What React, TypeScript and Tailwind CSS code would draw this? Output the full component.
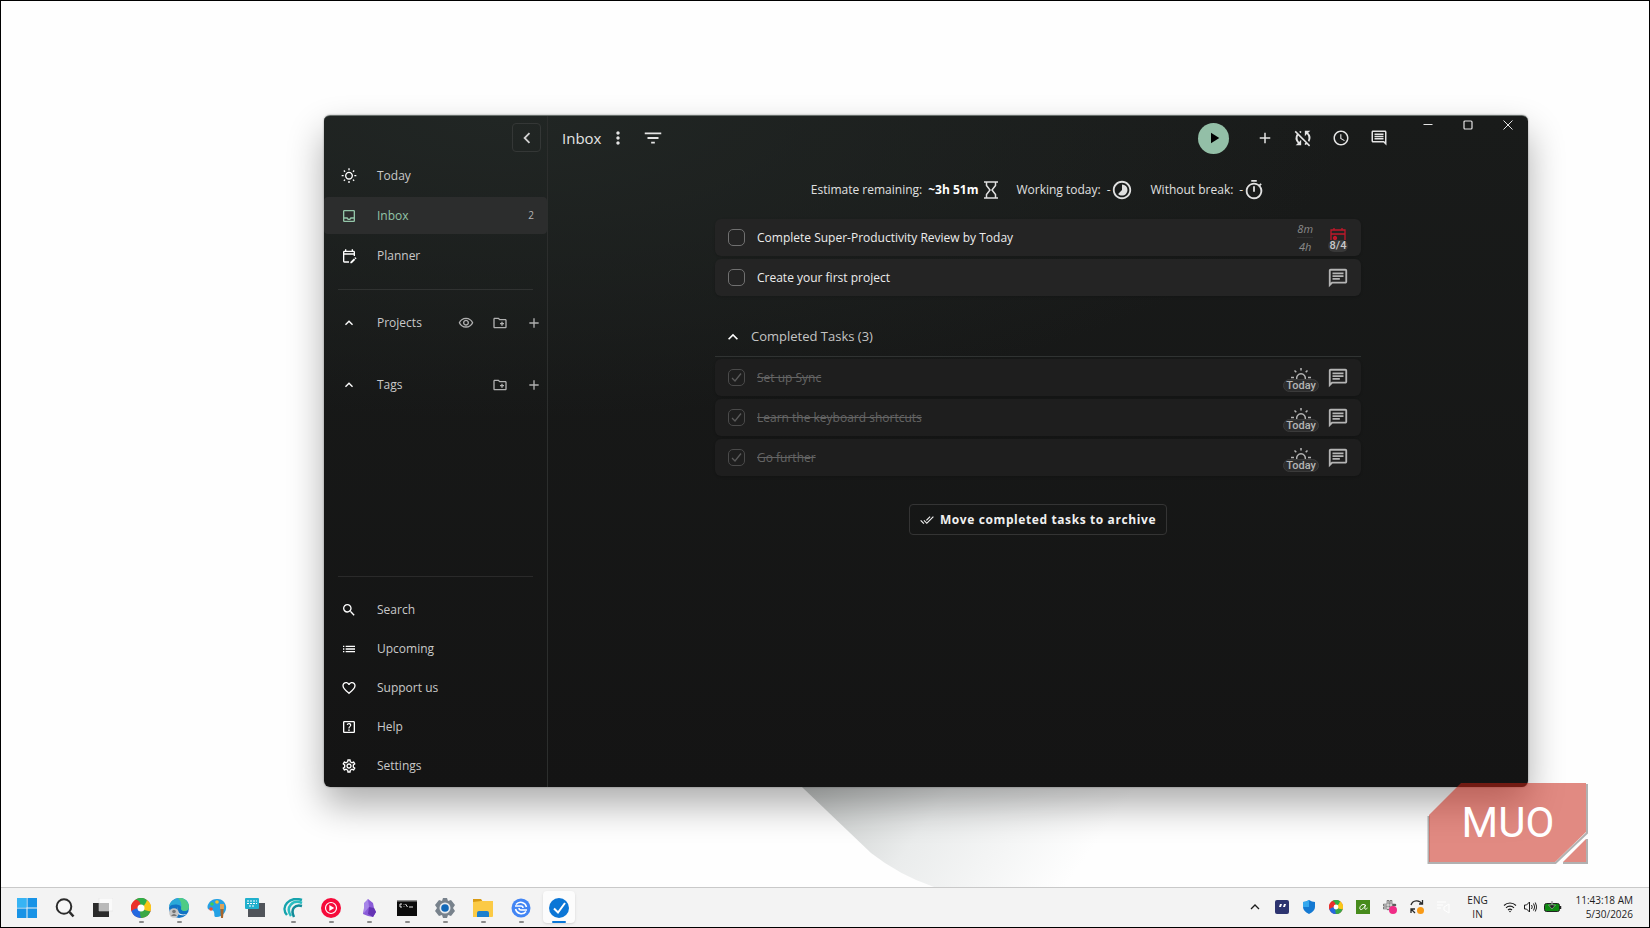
import React, { type ReactNode } from "react";
import {
  MdOutlineWbSunny, MdOutlineInbox, MdOutlineEditCalendar, MdExpandLess, MdOutlineVisibility,
  MdOutlineCreateNewFolder, MdAdd, MdSearch, MdList, MdFavoriteBorder, MdOutlineHelpCenter,
  MdOutlineSettings, MdMoreVert, MdFilterList, MdPlayArrow, MdSyncDisabled, MdSchedule,
  MdOutlineComment, MdOutlineTimer, MdOutlineTimelapse, MdOutlineChat, MdDoneAll, MdChevronLeft,
} from "react-icons/md";

type NavItemProps = { icon: ReactNode; label: string; active?: boolean; count?: number };

function NavItem({ icon, label, active, count }: NavItemProps) {
  return (
    <a
      href="#"
      className={
        active
          ? "flex h-[37px] items-center rounded bg-[#2c2d2d] pl-[17px] pr-[13px] text-[#93c5a8]"
          : "flex h-[37px] items-center rounded pl-[17px] pr-[13px] text-[#c9c9c9]"
      }
    >
      <span className={active ? "w-9 text-base" : "w-9 text-base text-white"}>{icon}</span>
      <span className="grow text-xs">{label}</span>
      {count !== undefined && <span className="text-[10px] text-[#b5b5b5]">{count}</span>}
    </a>
  );
}

function TreeHeader({ label, visibility }: { label: string; visibility?: boolean }) {
  return (
    <div className="flex h-[37px] items-center pl-[17px] pr-[5px] text-[#c9c9c9]">
      <button aria-label={"Collapse " + label} className="w-9 text-base text-white"><MdExpandLess /></button>
      <span className="grow text-xs">{label}</span>
      <span className="flex gap-[18px] text-base text-[#b0b0b0]">
        {visibility && <button aria-label="Show or hide projects"><MdOutlineVisibility /></button>}
        <button aria-label={"New folder in " + label}><MdOutlineCreateNewFolder /></button>
        <button aria-label={"Add to " + label}><MdAdd /></button>
      </span>
    </div>
  );
}

function Sidebar() {
  return (
    <nav className="flex w-56 shrink-0 flex-col border-r border-[#2c2e2d]">
      <div className="flex justify-end pr-[6px] pt-[7px]">
        <button aria-label="Collapse sidebar" className="flex size-[29px] items-center justify-center rounded border border-[#343736] text-[22px] text-[#d0d0d0]">
          <MdChevronLeft />
        </button>
      </div>
      <div className="mt-[5px] flex flex-col gap-[3px]">
        <NavItem icon={<MdOutlineWbSunny />} label="Today" />
        <NavItem icon={<MdOutlineInbox />} label="Inbox" active count={2} />
        <NavItem icon={<MdOutlineEditCalendar />} label="Planner" />
      </div>
      <hr className="mx-[14px] mt-[15px] border-[#303231]" />
      <div className="mt-[14px] flex flex-col gap-[25px]">
        <TreeHeader label="Projects" visibility />
        <TreeHeader label="Tags" />
      </div>
      <hr className="mx-[14px] mt-auto border-[#2a2a2a]" />
      <div className="mb-[3px] mt-[14px] flex flex-col gap-[2px]">
        <NavItem icon={<MdSearch />} label="Search" />
        <NavItem icon={<MdList />} label="Upcoming" />
        <NavItem icon={<MdFavoriteBorder />} label="Support us" />
        <NavItem icon={<MdOutlineHelpCenter />} label="Help" />
        <NavItem icon={<MdOutlineSettings />} label="Settings" />
      </div>
    </nav>
  );
}

function Header() {
  return (
    <header className="flex h-11 items-center pl-[14px] text-[#e4e4e4]">
      <h1 className="text-[15px]">Inbox</h1>
      <button aria-label="More" className="ml-[7px] text-xl"><MdMoreVert /></button>
      <button aria-label="Filter" className="ml-[14px] text-[22px]"><MdFilterList /></button>
      <div className="ml-auto flex items-center gap-4 text-lg">
        <button aria-label="Start tracking" className="mr-[9px] flex size-[31px] items-center justify-center rounded-full bg-[#93bfa7] text-black">
          <MdPlayArrow />
        </button>
        <button aria-label="Add task" className="flex w-[22px] justify-center"><MdAdd /></button>
        <button aria-label="Sync disabled" className="flex w-[22px] justify-center text-[22px]"><MdSyncDisabled /></button>
        <button aria-label="Focus mode" className="flex w-[22px] justify-center"><MdSchedule /></button>
        <button aria-label="Notes" className="flex w-[22px] justify-center"><MdOutlineComment /></button>
      </div>
      <div className="ml-[18px] flex self-start">
        <button aria-label="Minimize" className="flex h-[18px] w-10 items-center justify-center">
          <svg width="10" height="10" viewBox="0 0 10 10" stroke="currentColor"><path d="M0.500 4.500h9" /></svg>
        </button>
        <button aria-label="Maximize" className="flex h-[18px] w-10 items-center justify-center">
          <svg width="10" height="10" viewBox="0 0 10 10" fill="none" stroke="currentColor" strokeWidth="1.200"><rect x="1" y="1" width="8" height="8" rx="1" /></svg>
        </button>
        <button aria-label="Close" className="flex h-[18px] w-10 items-center justify-center">
          <svg width="10" height="10" viewBox="0 0 10 10" stroke="currentColor"><path d="M0.500 0.500l9 9M9.500 0.500l-9 9" /></svg>
        </button>
      </div>
    </header>
  );
}

function Stats() {
  return (
    <div className="mt-[19px] flex items-center justify-center gap-[18px] text-xs text-[#e0e0e0]">
      <span className="flex items-center gap-[6px]">
        Estimate remaining: <b className="text-white">~3h 51m</b>
        <svg width="14" height="18" viewBox="0 0 14 18" fill="none" stroke="currentColor" strokeWidth="1.500">
          <path d="M0 1h14M0 17h14M2.500 1v3.500L6 9l-3.500 4.500V17M11.500 1v3.500L8 9l3.500 4.500V17" />
        </svg>
      </span>
      <span className="flex items-center">
        Working today: <span className="ml-[6px]">-</span>
        <MdOutlineTimelapse className="text-[22px]" />
      </span>
      <span className="flex items-center">
        Without break: <span className="ml-[6px]">-</span>
        <MdOutlineTimer className="text-[22px]" />
      </span>
    </div>
  );
}

function TaskRow({ title, done, children }: { title: string; done?: boolean; children?: ReactNode }) {
  return (
    <li
      className={
        done
          ? "flex h-[37px] items-center rounded-md bg-[#1e1e1e] pl-[13px] pr-3 shadow-sm"
          : "flex h-[37px] items-center rounded-md bg-[#242424] pl-[13px] pr-3 shadow-sm"
      }
    >
      <label className="flex grow items-center gap-3">
        <span className="grid size-[17px] place-items-center">
          <input
            type="checkbox"
            defaultChecked={done}
            className={
              done
                ? "col-start-1 row-start-1 size-[17px] appearance-none rounded-[5px] border border-[#4a4a4a]"
                : "col-start-1 row-start-1 size-[17px] appearance-none rounded-[5px] border border-[#707070]"
            }
          />
          {done && (
            <svg className="col-start-1 row-start-1" width="11" height="11" viewBox="0 0 11 11" fill="none" stroke="#5a5a5a" strokeWidth="1.300">
              <path d="M1 6l3 3 6-7.500" />
            </svg>
          )}
        </span>
        <span className={done ? "text-xs text-[#646464] line-through" : "text-xs text-[#ececec]"}>{title}</span>
      </label>
      <div className="flex items-center gap-2 text-[#b4b4b4]">{children}</div>
    </li>
  );
}

function NotesButton() {
  return <button aria-label="Notes" className="text-[22px]"><MdOutlineChat /></button>;
}

function TodayBadge() {
  return (
    <button className="flex flex-col items-center pt-1">
      <svg width="20" height="11" viewBox="0 0 20 11" fill="none" stroke="currentColor" strokeWidth="1.500">
        <path d="M10 0v2.500M3.500 2.500l1.800 1.800M16.500 2.500l-1.800 1.800M0 9.500h3M17 9.500h3M5.800 11a4.300 4.300 0 1 1 8.400 0" />
      </svg>
      <span className="rounded-full border border-[#3a3a3a] bg-[#2c2c2c] px-[2px] font-['Roboto',sans-serif] text-[11px] font-medium leading-[11px]">Today</span>
    </button>
  );
}

function Main() {
  return (
    <main className="flex min-w-0 grow flex-col">
      <Header />
      <Stats />
      <div className="mx-auto mt-[18px] w-full max-w-[646px]">
        <ul className="flex flex-col gap-[3px]">
          <TaskRow title="Complete Super-Productivity Review by Today">
            <span className="flex flex-col items-center pr-[6px] text-[11px] italic leading-[17px] text-[#8a8a8a]">
              <span className="border-b border-[#303030]">8m</span>
              <span>4h</span>
            </span>
            <button className="flex w-[22px] flex-col items-center pt-[5px] text-[#c0182a]">
              <svg width="16" height="12" viewBox="0 0 16 12" fill="none" stroke="currentColor" strokeWidth="1.300">
                <path d="M1 12V2h14v10M1 6h14M4 0v2M12 0v2" /><circle cx="5" cy="10" r="1.500" fill="currentColor" />
              </svg>
              <span className="rounded-full bg-[#383838] px-[2px] font-['Roboto',sans-serif] text-[11px] font-medium leading-3 text-[#c8c8c8]">8/4</span>
            </button>
          </TaskRow>
          <TaskRow title="Create your first project"><NotesButton /></TaskRow>
        </ul>
        <button className="mt-[26px] flex h-[30px] items-center gap-2 pl-2 text-[13px] text-[#c4c4c4]">
          <MdExpandLess className="text-xl text-white" />
          Completed Tasks (3)
        </button>
        <hr className="mt-1 border-[#303332]" />
        <ul className="mt-[2px] flex flex-col gap-[3px]">
          <TaskRow title="Set up Sync" done><TodayBadge /><NotesButton /></TaskRow>
          <TaskRow title="Learn the keyboard shortcuts" done><TodayBadge /><NotesButton /></TaskRow>
          <TaskRow title="Go further" done><TodayBadge /><NotesButton /></TaskRow>
        </ul>
      </div>
      <button className="mx-auto mt-7 flex h-[31px] items-center gap-[6px] rounded border border-[#343434] px-[10px] text-xs font-bold tracking-wider text-[#f0f0f0]">
        <MdDoneAll className="text-sm" />
        Move completed tasks to archive
      </button>
    </main>
  );
}

function Wallpaper() {
  return (
    <svg className="absolute bottom-0 left-[780px] h-[120px] w-[560px]" viewBox="0 0 560 120" aria-hidden="true">
      <defs>
        <linearGradient id="fold" gradientUnits="userSpaceOnUse" x1="20" y1="20" x2="240" y2="180">
          <stop offset="0" stopColor="#c3c6c5" />
          <stop offset="0.450" stopColor="#eaecec" />
          <stop offset="1" stopColor="#fefefe" />
        </linearGradient>
      </defs>
      <path d="M0 0L90 86Q118 108 153 120H560V0z" fill="url(#fold)" />
    </svg>
  );
}

function Watermark() {
  return (
    <svg className="absolute bottom-[17px] right-[53px] h-[90px] w-[170px]" viewBox="0 0 170 90" role="img" aria-label="MUO">
      <g fill="none" stroke="#000" strokeOpacity="0.300" strokeWidth="2">
        <path d="M2.500 36V83H129.500L161 53V4M137 83H161V59" />
      </g>
      <g fill="#c62213" fillOpacity="0.530">
        <path d="M35 3H160V52L129 82H3V35z" />
        <path d="M160 59V82H137z" />
      </g>
      <text x="82" y="57" textAnchor="middle" className="fill-white font-['Roboto',sans-serif] text-[42px]">MUO</text>
    </svg>
  );
}

const ringColors = ["#2fae48", "#f9c718", "#3aa845", "#2469e0", "#ea2f2b"];

function RingIcon({ className }: { className: string }) {
  return (
    <svg className={className} viewBox="0 0 20 20">
      <circle cx="10" cy="10" r="10" fill="#ea2f2b" />
      {ringColors.map((color, i) => (
        <path key={i} d="M4.100 1.900A10 10 0 0 1 15.900 1.900Q18 7 10 10Q8 4 4.100 1.900z" fill={color} transform={`rotate(${i * 72} 10 10)`} />
      ))}
      <circle cx="10" cy="10" r="3.500" fill="#fff" />
    </svg>
  );
}

const apps: { name: string; icon: ReactNode; state?: "running" | "active" }[] = [
  { name: "Start", icon: (
    <svg className="size-5" viewBox="0 0 20 20" fill="#1893e6"><path d="M0 0h9.500v9.500H0zM10.500 0H20v9.500h-9.500zM0 10.500h9.500V20H0zM10.500 10.500H20V20h-9.500z" /><path d="M0 0h9.500v9.500H0z" fill="#37b4f4" /></svg>
  ) },
  { name: "Search", icon: (
    <svg className="size-5" viewBox="0 0 20 20" fill="none" stroke="#2b2b2b" strokeWidth="2"><circle cx="9" cy="8.500" r="7.300" fill="#f7f7f7" /><path d="M14.500 14l4 4.500" strokeWidth="2.600" /></svg>
  ) },
  { name: "Task view", icon: (
    <svg className="size-5" viewBox="0 0 20 20"><path d="M0 5h16v14H0z" fill="#2b2b2b" /><path d="M6 0h14v13H6z" fill="#fafafa" stroke="#dedede" strokeWidth=".5" /><path d="M6 5h10v8H6z" fill="#b9b9b9" /></svg>
  ) },
  { name: "Browser", icon: <RingIcon className="size-5" />, state: "running" },
  { name: "Edge", state: "running", icon: (
    <svg className="size-5" viewBox="0 0 20 20"><circle cx="10" cy="10" r="10" fill="#1173c4" /><path d="M0 9C1-2 20-4 20 9c0 5-7 5-8 2 2-5-9-6-12-2z" fill="#2aa9d8" /><path d="M9 0c9-1 11 7 11 9 0 5-7 5-8 2 1-5 0-8-3-11z" fill="#4fcb85" /><path d="M9 9c-2 4 1 9 9 7-3 2-9 2-10-2z" fill="#f4f4f4" /><circle cx="5" cy="15" r="4.800" fill="#c6c6c6" /><circle cx="5" cy="13.500" r="1.800" fill="#777" /><path d="M2 18q3-4 6 0z" fill="#777" /></svg>
  ) },
  { name: "Paint", icon: (
    <svg className="size-5" viewBox="0 0 20 20"><path d="M11 1C3 0-1 8 1 11c2 2 5 0 6 3 1 3-1 5 3 5 6 0 10-6 9-11-1-4-4-7-8-7z" fill="#25a1e4" /><circle cx="5" cy="6" r="1.800" fill="#3ccc5c" /><circle cx="10" cy="4" r="1.800" fill="#f3c22e" /><circle cx="4" cy="11" r="1.800" fill="#ea4d38" /><path d="M13.500 6h3v8l-.5 6h-2l-.5-6z" fill="#a8662e" /><path d="M13 6h4v5h-4z" fill="#dca15a" /></svg>
  ) },
  { name: "On-screen keyboard", icon: (
    <svg className="size-5" viewBox="0 0 20 20"><path d="M3 5h17v14H3z" fill="#50545a" /><rect width="14" height="11" rx="1" fill="#20b0cd" /><path d="M2 3h10M2 5.500h10M4 8h6" stroke="#fff" strokeDasharray="2 1" /></svg>
  ) },
  { name: "Waves", state: "running", icon: (
    <svg className="size-5" viewBox="0 0 20 20" fill="none" strokeWidth="2.500"><path d="M19 2C6-2-3 9 4 17" stroke="#16a3ad" /><path d="M19 5C10 1 2 9 8 18" stroke="#2abdc0" /><path d="M19 8C12 6 7 11 11 19" stroke="#128b99" /></svg>
  ) },
  { name: "Music", state: "running", icon: (
    <svg className="size-5" viewBox="0 0 20 20"><circle cx="10" cy="10" r="10" fill="#f60b3b" /><circle cx="10" cy="10" r="5.500" fill="none" stroke="#fff" strokeWidth="1.200" /><path d="M8.300 7l5 3-5 3z" fill="#fff" /></svg>
  ) },
  { name: "Crystal", state: "running", icon: (
    <svg className="size-5" viewBox="0 0 20 20"><path d="M9 1l5 4 1 5 2 4-3 5-5-1-5-2 1-6z" fill="#8a5bd8" /><path d="M9 1l1 8-5 6V5z" fill="#a685e8" /><path d="M10 9l5 1 2 4-3 5-5-3z" fill="#6534b4" /></svg>
  ) },
  { name: "Terminal", state: "running", icon: (
    <svg className="size-5" viewBox="0 0 20 20"><path d="M0 2h20v16H0z" fill="#0c0c0c" /><path d="M0 2h20v1.500H0z" fill="#8f8f8f" /><path d="M5 6H3v3h2M7 6.500v.5M7 8.500v.5M8.500 6l2 3M12 9h4" stroke="#e8e8e8" fill="none" /></svg>
  ) },
  { name: "Settings", state: "running", icon: (
    <svg className="size-5" viewBox="0 0 20 20"><path d="M8 0h4l1 3 3-1 4 5-2 3 2 3-4 5-3-1-1 3H8l-1-3-3 1-4-5 2-3-2-3 4-5 3 1z" fill="#78828c" /><circle cx="10" cy="10" r="5.500" fill="#e6eaee" /><circle cx="10" cy="10" r="3.800" fill="#1268b8" /></svg>
  ) },
  { name: "File Explorer", state: "running", icon: (
    <svg className="size-5" viewBox="0 0 20 20"><path d="M0 1h8l2 3H0z" fill="#d99a12" /><path d="M0 4l8-1h12v15q0 1-1 1H0z" fill="#fbca45" /><path d="M4 19v-4q0-2 2-2h8q2 0 2 2v4z" fill="#1b7fce" /></svg>
  ) },
  { name: "Sync", state: "running", icon: (
    <svg className="size-5" viewBox="0 0 20 20" fill="none" stroke="#fff" strokeWidth="1.500"><circle cx="10" cy="10" r="9.500" fill="#4285f4" stroke="none" /><path d="M15.500 9A6 6 0 0 0 5 6.500M4.500 11A6 6 0 0 0 15 13.500M4 8h6q2 0 2 2M16 12h-6q-2 0-2-2" /></svg>
  ) },
  { name: "Super Productivity", state: "active", icon: (
    <svg className="size-5" viewBox="0 0 20 20"><circle cx="10" cy="10" r="10" fill="#0b76d6" /><path d="M5 10.500l4 4L16 5" fill="none" stroke="#fff" strokeWidth="2" /></svg>
  ) },
];

function Taskbar() {
  return (
    <footer className="flex h-10 shrink-0 items-center justify-between border-t border-[#c9c9c9] bg-[#f3f3f3] pb-[2px] pl-[10px] pr-4 text-[#1c1c1c]">
      <div className="flex gap-[6px]">
        {apps.map((app) => (
          <button
            key={app.name}
            aria-label={app.name}
            className={
              app.state === "active"
                ? "flex h-8 w-8 flex-col items-center justify-end rounded bg-[#fcfcfc] shadow-sm"
                : "flex h-8 w-8 flex-col items-center justify-end rounded"
            }
          >
            {app.icon}
            <span
              className={
                app.state === "active"
                  ? "mt-[3px] h-[2px] w-[14px] rounded-full bg-[#0b76d6]"
                  : app.state === "running"
                    ? "mt-[3px] h-[2px] w-[5px] rounded-full bg-[#8a8a8a]"
                    : "mt-[3px] h-[2px] w-[5px]"
              }
            />
          </button>
        ))}
      </div>
      <div className="flex items-center text-[10px] leading-[14px]">
        <div className="flex items-center gap-[13px]">
          <svg className="size-[14px]" viewBox="0 0 14 14" fill="none" stroke="currentColor" strokeWidth="1.300"><path d="M3 9l4-4 4 4" /></svg>
          <svg className="size-[14px]" viewBox="0 0 14 14"><rect width="14" height="14" rx="2" fill="#2d3470" /><path d="M5 4h2l-1 3H4zM9 4h2l-1 3H8z" fill="#fff" /></svg>
          <svg className="size-[14px]" viewBox="0 0 14 14"><path d="M7 0q3 2 6 2v5q0 4-6 7-6-3-6-7V2q3 0 6-2z" fill="#1479d2" /><path d="M7 0v7H1V2q3 0 6-2z" fill="#35a8ee" /></svg>
          <RingIcon className="size-[14px]" />
          <svg className="size-[14px]" viewBox="0 0 14 14"><path d="M0 0h14v14H0z" fill="#478b1c" /><path d="M9.500 5C6 3 3 7 4 9s4-1 5.500-4c-1 3-1.500 6 2 3" fill="none" stroke="#fff" /></svg>
          <svg className="size-[14px]" viewBox="0 0 14 14" fill="none" stroke="#5c5c5c"><path d="M5 1v8M8 1v8M1 5h8M1 8h8M8 5h4" strokeWidth="2.600" strokeLinecap="round" /><path d="M5 1v8M8 1v8M1 5h8M1 8h8" stroke="#f3f3f3" strokeLinecap="round" /><circle cx="10" cy="10" r="4" fill="#f02c86" stroke="none" /></svg>
          <svg className="size-[14px]" viewBox="0 0 14 14" fill="none" stroke="#2b2b2b" strokeWidth="1.300"><path d="M1 5A6 6 0 0 1 12 4M12.500 0v4H9M1 13V9h4M1 9l4 4" /><circle cx="10.500" cy="10.500" r="3.500" fill="#f99a15" stroke="none" /></svg>
          <svg className="size-[14px]" viewBox="0 0 14 14" fill="none" stroke="#fff"><path d="M0 2h9M0 5h6M0 8h4M7 7l5-3v9l-5-3z" /></svg>
        </div>
        <div className="ml-4 w-[22px] text-center">ENG<br />IN</div>
        <div className="ml-[14px] flex items-center gap-[7px]">
          <svg width="14" height="12" viewBox="0 0 14 12" fill="none" stroke="currentColor" strokeWidth="1.100"><path d="M1 4.500a8.500 8.500 0 0 1 12 0M3 6.800a5.700 5.700 0 0 1 8 0M5 9a3 3 0 0 1 4 0" /><circle cx="7" cy="10.500" r=".8" fill="currentColor" stroke="none" /></svg>
          <svg width="13" height="12" viewBox="0 0 13 12" fill="none" stroke="currentColor"><path d="M.5 4h2l3-3v10l-3-3h-2zM7.500 4q1.500 2 0 4M9.500 2.500q2.500 3.500 0 7M11.300 1.500q3 4.500 0 9" /></svg>
          <svg width="18" height="12" viewBox="0 0 18 12"><rect x=".5" y="2.500" width="15" height="8" rx="2" fill="#0f8a12" stroke="#222" /><path d="M16.500 5v3" stroke="#222" strokeWidth="1.500" /><path d="M7.500 0h1v4h3L8 8 4.500 4h3z" fill="#222" stroke="#f3f3f3" strokeWidth=".4" /></svg>
        </div>
        <div className="ml-[14px] text-right">11:43:18 AM<br />5/30/2026</div>
      </div>
    </footer>
  );
}

export default function App() {
  return (
    <div className="flex h-screen flex-col border border-black bg-[#fdfdfd] font-['Open_Sans','Noto_Sans',sans-serif]">
      <div className="relative grow overflow-hidden bg-[#fefefe]">
        <Wallpaper />
        <div className="absolute bottom-[100px] left-[323px] right-[121px] top-[114px] flex overflow-hidden rounded-md border-t border-[#68706c] bg-[radial-gradient(ellipse_70%_45%_at_15%_0%,#212624,transparent),linear-gradient(#191b1a,#141414)] shadow-[0_0_2px_rgba(0,0,0,0.400),0_18px_36px_rgba(0,0,0,0.320)]">
          <Sidebar />
          <Main />
        </div>
        <Watermark />
      </div>
      <Taskbar />
    </div>
  );
}
